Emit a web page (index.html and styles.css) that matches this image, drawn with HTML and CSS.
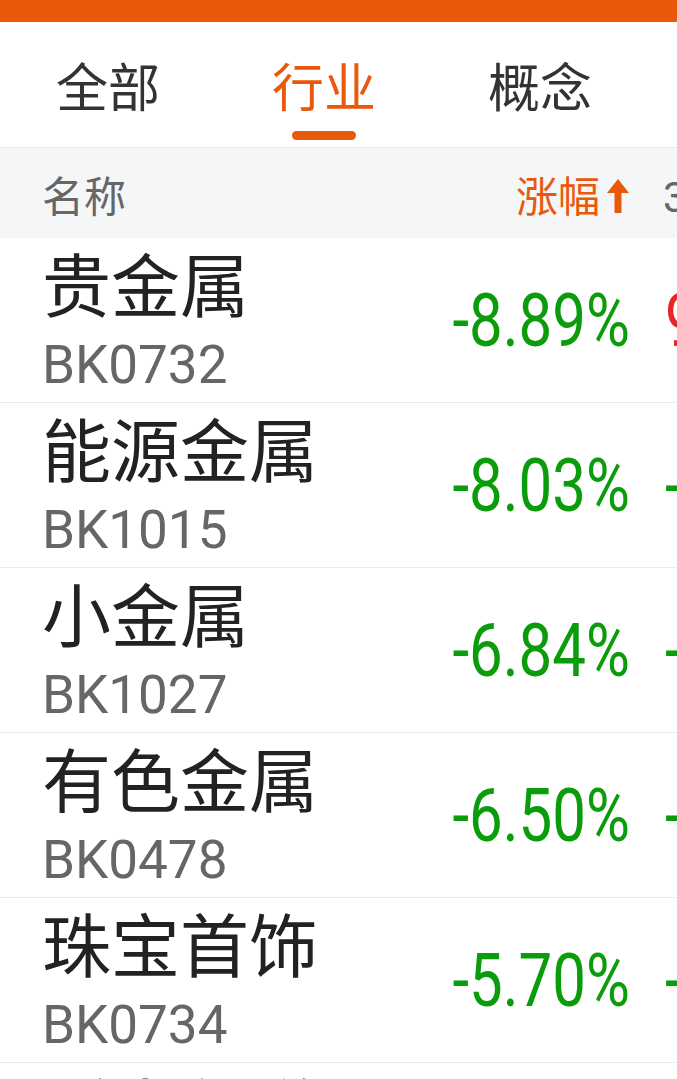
FILE: index.html
```html
<!DOCTYPE html>
<html>
	<head>
		<meta charset="utf-8" />
		<title>行业板块</title>
		<link rel="stylesheet" href="styles.css">
	</head>

	<body>
		<div class="topbar"></div>

		<div class="tabs">
			<div class="tab">
				<span class="tab-text">全部</span>
				<i class="tab-line"></i>
			</div>
			<div class="tab on">
				<span class="tab-text">行业</span>
				<i class="tab-line"></i>
			</div>
			<div class="tab">
				<span class="tab-text">概念</span>
				<i class="tab-line"></i>
			</div>
		</div>

		<div class="head">
			<div class="col-name">名称</div>
			<div class="col-pct sort">
				涨幅
				<svg class="arrow" width="24" height="38" viewBox="0 0 24 38">
					<path d="M12 3 L23 17 L15.5 17 L15.5 37 L8.5 37 L8.5 17 L1 17 Z" fill="#e8590c" />
				</svg>
			</div>
			<div class="col-next">3日涨幅</div>
		</div>

		<ul class="list">
			<li>
				<div class="col-name">
					<p class="name">贵金属</p>
					<p class="code">BK0732</p>
				</div>
				<div class="col-pct"><span class="pct down">-8.89%</span></div>
				<div class="col-next"><span class="pct up">9.12%</span></div>
			</li>
			<li>
				<div class="col-name">
					<p class="name">能源金属</p>
					<p class="code">BK1015</p>
				</div>
				<div class="col-pct"><span class="pct down">-8.03%</span></div>
				<div class="col-next"><span class="pct down">-2.31%</span></div>
			</li>
			<li>
				<div class="col-name">
					<p class="name">小金属</p>
					<p class="code">BK1027</p>
				</div>
				<div class="col-pct"><span class="pct down">-6.84%</span></div>
				<div class="col-next"><span class="pct down">-1.87%</span></div>
			</li>
			<li>
				<div class="col-name">
					<p class="name">有色金属</p>
					<p class="code">BK0478</p>
				</div>
				<div class="col-pct"><span class="pct down">-6.50%</span></div>
				<div class="col-next"><span class="pct down">-1.52%</span></div>
			</li>
			<li>
				<div class="col-name">
					<p class="name">珠宝首饰</p>
					<p class="code">BK0734</p>
				</div>
				<div class="col-pct"><span class="pct down">-5.70%</span></div>
				<div class="col-next"><span class="pct down">-3.06%</span></div>
			</li>
			<li>
				<div class="col-name">
					<p class="name">稀土永磁</p>
					<p class="code">BK0578</p>
				</div>
				<div class="col-pct"><span class="pct down">-5.12%</span></div>
				<div class="col-next"><span class="pct down">-0.98%</span></div>
			</li>
		</ul>
	</body>

</html>
```

FILE: styles.css
```css
html,
body,
ul,
p {
	margin: 0;
	padding: 0;
}

html,
body {
	overflow: hidden;
}

body {
	width: 677px;
	background: #fff;
	font-family: "Noto Sans CJK SC", "Noto Sans", sans-serif;
}

li {
	list-style: none;
}

.topbar {
	height: 22px;
	background: #e8590c;
}

/* 顶部分类 */
.tabs {
	display: flex;
	border-bottom: 1px solid #e8e8e8;
}

.tab {
	display: flex;
	flex-direction: column;
	align-items: center;
	flex: 0 0 216px;
	padding: 36px 0 7px;
}

.tab-text {
	font-size: 52px;
	line-height: 54px;
	color: #333;
}

.tab-line {
	display: block;
	width: 64px;
	height: 9px;
	margin-top: 19px;
	border-radius: 5px;
	background: transparent;
}

.tab.on .tab-text {
	color: #e8590c;
}

.tab.on .tab-line {
	background: #e8590c;
}

/* 表头 */
.head {
	display: flex;
	align-items: center;
	height: 90px;
	background: #f5f6f8;
	font-size: 42px;
	color: #666;
}

.col-name {
	box-sizing: border-box;
	flex: 0 0 390px;
	padding-left: 42px;
	white-space: nowrap;
}

.col-pct {
	display: flex;
	justify-content: flex-end;
	align-items: center;
	flex: 0 0 240px;
	white-space: nowrap;
}

.col-next {
	flex: 0 0 200px;
	padding-left: 35px;
	white-space: nowrap;
}

.head .col-next {
	font-family: Roboto, "Noto Sans CJK SC", sans-serif;
}

.sort {
	color: #e8590c;
	margin-right: -2px;
}

.arrow {
	margin-left: 6px;
	margin-top: 4px;
}

/* 列表 */
.list li {
	display: flex;
	align-items: center;
	padding: 10px 0 10px;
	border-bottom: 1px solid #ebebeb;
}

.name {
	font-size: 69px;
	line-height: 69px;
	color: #222;
}

.code {
	margin-top: 22px;
	font-family: Roboto, sans-serif;
	font-size: 53px;
	line-height: 53px;
	color: #666;
}

.pct {
	display: inline-block;
	font-family: Roboto, sans-serif;
	font-size: 75px;
	line-height: 75px;
	transform: scaleX(0.8);
}

.col-pct .pct {
	transform-origin: right center;
}

.col-next .pct {
	transform-origin: left center;
}

.down {
	color: #0b9c0b;
}

.up {
	color: #e5262a;
}
```
